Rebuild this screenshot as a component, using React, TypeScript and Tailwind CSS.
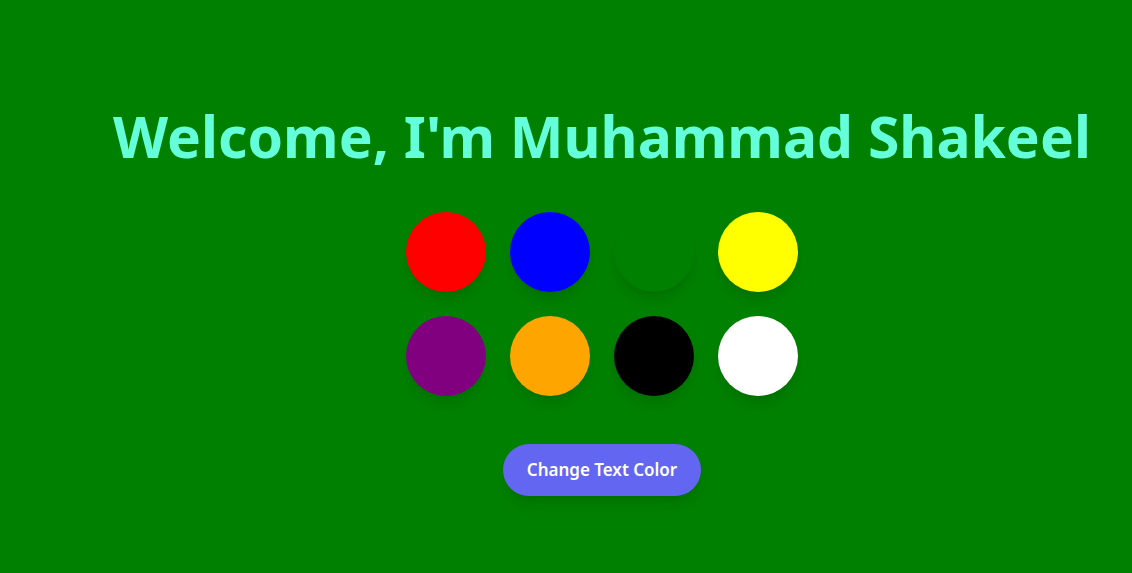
const colors = ['#ff0000', '#0000ff', '#008000', '#ffff00', '#800080', '#ffa500', '#000000', '#ffffff'];

const App = () => {
  return (
    <div className="min-h-screen bg-[#008000] pl-[72px] pt-[104px] flex flex-col items-center font-['Noto_Sans',sans-serif]">
      <h1 className="text-[57px] leading-[64px] font-bold text-[#64ffda] whitespace-nowrap">
        Welcome, I'm Muhammad Shakeel
      </h1>
      <div className="mt-[44px] grid grid-cols-4 gap-6">
        {colors.map((c) => (
          <button
            key={c}
            className="w-20 h-20 rounded-full shadow-lg"
            style={{ backgroundColor: c }}
          />
        ))}
      </div>
      <button className="mt-12 h-[52px] w-[198px] rounded-full bg-[#6366f1] text-white text-[17px] font-semibold shadow-lg">
        Change Text Color
      </button>
    </div>
  );
};

export default App;
